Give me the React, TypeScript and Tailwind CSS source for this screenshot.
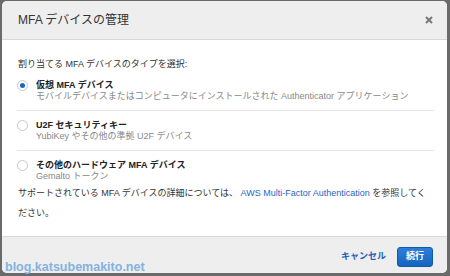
import React from "react";

const font = { fontFamily: '"Liberation Sans", "Noto Sans CJK JP", sans-serif' };

function Radio({ checked }: { checked?: boolean }) {
  return (
    <span className="mt-[1px] flex h-[11px] w-[11px] shrink-0 items-center justify-center rounded-full border border-[#c8c8c8] bg-white">
      {checked && <span className="h-[5px] w-[5px] rounded-full bg-[#1a66c9]" />}
    </span>
  );
}

function Option({ checked, title, sub, last }: { checked?: boolean; title: string; sub: string; last?: boolean }) {
  return (
    <div className={`flex gap-[8px] ${last ? "pt-[8px]" : "py-[8px] border-b border-[#e6e6e6]"}`}>
      <Radio checked={checked} />
      <div className="flex flex-col">
        <span className="text-[9px] font-bold leading-[12px] text-[#222]">{title}</span>
        <span className="text-[9px] leading-[11px] text-[#888]">{sub}</span>
      </div>
    </div>
  );
}

export default function App() {
  return (
    <div className="relative h-[276px] w-[450px] overflow-hidden bg-[#6a6a6a] pl-[2px] pt-[1px]" style={font}>
      <div className="flex h-[272px] w-[445px] flex-col overflow-hidden rounded-[5px] bg-white">
        <div className="flex h-[39px] shrink-0 items-center justify-between border-b border-[#d8d8d8] bg-[#eeeeee] pl-[16px] pr-[14px]">
          <span className="text-[12px] text-[#333]">MFA デバイスの管理</span>
          <svg width="8" height="8" viewBox="0 0 8 8">
            <path d="M1 1L7 7M7 1L1 7" stroke="#777" strokeWidth="2" />
          </svg>
        </div>
        <div className="flex flex-1 flex-col px-[16px] pt-[18px]">
          <div className="text-[9px] leading-[12px] text-[#333]">割り当てる MFA デバイスのタイプを選択:</div>
          <div className="mt-[1px] ml-[-1px] mr-[-3px]">
            <Option checked title="仮想 MFA デバイス" sub="モバイルデバイスまたはコンピュータにインストールされた Authenticator アプリケーション" />
            <Option title="U2F セキュリティキー" sub="YubiKey やその他の準拠 U2F デバイス" />
            <Option last title="その他のハードウェア MFA デバイス" sub="Gemalto トークン" />
          </div>
          <p className="mt-[1px] text-[9px] leading-[20px] text-[#333]">
            サポートされている MFA デバイスの詳細については、 <span className="text-[#1f66c2]">AWS Multi-Factor Authentication</span> を参照してください。
          </p>
        </div>
        <div className="flex h-[37px] shrink-0 items-end justify-end gap-[11px] border-t border-[#d8d8d8] bg-[#eeeeee] pb-[6px] pr-[14px]">
          <span className="mb-[5px] text-[9px] font-bold leading-[11px] text-[#1f5fb0]">キャンセル</span>
          <span className="flex h-[20px] w-[36px] items-center justify-center rounded-[3px] border border-[#1557a6] bg-gradient-to-b from-[#2b7fd9] to-[#1465c0] text-[9px] font-bold text-white">続行</span>
        </div>
      </div>
      <span className="absolute left-[5px] top-[259px] text-[12.5px] font-bold leading-[16px] text-[#84b2df]">blog.katsubemakito.net</span>
    </div>
  );
}
